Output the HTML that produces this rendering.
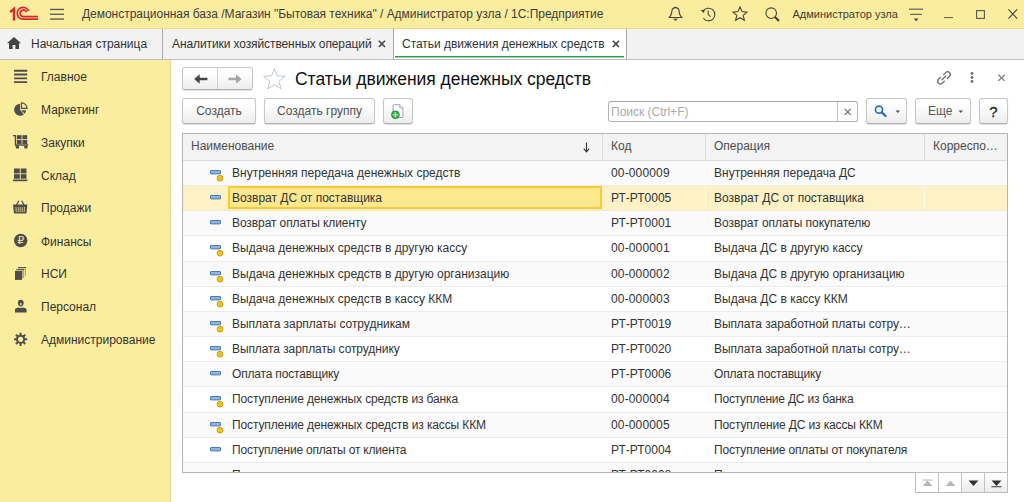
<!DOCTYPE html>
<html lang="ru">
<head>
<meta charset="utf-8">
<title>Статьи движения денежных средств</title>
<style>
*{box-sizing:border-box;margin:0;padding:0}
html,body{width:1024px;height:502px;overflow:hidden;background:#fff}
body{font-family:"Liberation Sans",sans-serif;font-size:12px;color:#333;position:relative}
svg{position:absolute;overflow:visible}
#titlebar{position:absolute;left:0;top:0;width:1024px;height:29px;background:#fbed9e;border-bottom:1px solid #e9d98a}
#titlebar .t{position:absolute;top:0;height:29px;line-height:29px;white-space:nowrap;color:#3c3c3c}
#tabs{position:absolute;left:0;top:29px;width:1024px;height:31px;background:#f2f2f2;border-bottom:1px solid #bdbdbd}
#tabs .t{position:absolute;top:0;height:30px;line-height:30px;white-space:nowrap;color:#333}
#tabs .sep{position:absolute;top:0;width:1px;height:30px;background:#a9a9a9}
#activetab{position:absolute;left:394px;top:0;width:233px;height:30px;background:#fff;border-right:1px solid #a9a9a9}
#activetab:after{content:"";position:absolute;left:1px;right:2px;bottom:1px;height:2px;background:linear-gradient(#22a04d 50%,rgba(34,160,77,.45) 50%)}
#sidebar{position:absolute;left:0;top:60px;width:171px;height:442px;background:#fbed9e;border-right:1px solid #e6d88f}
#sidebar .it{position:absolute;left:41px;height:20px;line-height:20px;white-space:nowrap;color:#333}
#content{position:absolute;left:171px;top:60px;width:853px;height:442px;background:#fff}
.btn{position:absolute;border:1px solid #c6c6c6;border-bottom-color:#b0b0b0;border-radius:3px;background:linear-gradient(#ffffff 20%,#ededed);box-shadow:0 1px 1px rgba(0,0,0,.13);text-align:center;color:#505050;white-space:nowrap}
#title{position:absolute;left:124px;top:8px;letter-spacing:-0.03px;font-size:17.5px;line-height:22px;color:#111;white-space:nowrap}
#search{position:absolute;left:437px;top:41px;width:250px;height:21px;border:1px solid #b4b4b4;border-top-color:#a6a6a6;border-radius:3px;background:#fff}
#search span{position:absolute;left:2px;top:0;line-height:21px;color:#aaa}
#search i{position:absolute;left:228px;top:0;width:1px;height:19px;background:#c4c4c4}
#grid{position:absolute;left:11px;top:73px;width:826px;height:340px;border:1px solid #b3b3b3;overflow:hidden;background:#fff}
#grid .hd{position:absolute;left:0;top:0;width:824px;height:27px;background:#f3f3f3;border-bottom:1px solid #dadada}
#grid .hd span{position:absolute;top:0;height:26px;line-height:25px;color:#4d4d4d;white-space:nowrap}
#grid .hd i{position:absolute;top:0;width:1px;height:26px;background:#dcdcdc}
.row{position:absolute;left:0;width:824px;border-bottom:1px solid #ececec;background:#fff}
.row.alt{background:#fafafa}
.row.sel{background:#fdf2c6;border-bottom-color:#f3e9c2}
.row span{position:absolute;top:0;height:25px;line-height:25px;white-space:nowrap;color:#333}
.row .n{left:49px}
.row .c{left:428px}
.row .o{left:531px}
.row svg{left:27px;top:9px}
.row .cur{position:absolute;left:45px;top:0;width:374px;height:23px;border:2px solid #f8cb34;background:#fde78f}
.row .vs{position:absolute;top:0;width:1px;height:24px;background:#fffbe9}
#pager{position:absolute;left:744px;top:412px;width:93px;height:21px;border:1px solid #bdbdbd;background:#fff}
#pager i{position:absolute;top:0;width:1px;height:19px;background:#c4c4c4}
#pager b{position:absolute;top:0;height:19px;background:linear-gradient(#fff,#ececec)}
</style>
</head>
<body>
<div id="titlebar">
  <svg style="left:9px;top:6px" width="30" height="16" viewBox="0 0 30 16">
    <path d="M1.2 6.2 L5 2.9 V14.4" fill="none" stroke="#d9262c" stroke-width="2.4"/>
    <g fill="none" stroke="#d9262c" stroke-width="1.8">
      <path d="M29 13.2 H14.5 A5.9 5.9 0 1 1 19.6 5"/>
      <path d="M29 10.6 H14.6 A3.3 3.3 0 1 1 17.6 6.2"/>
    </g>
  </svg>
  <svg style="left:50px;top:8px" width="15" height="13" viewBox="0 0 15 13">
    <g fill="#555"><rect x="0" y="0.8" width="14" height="1.3"/><rect x="0" y="5.6" width="14" height="1.3"/><rect x="0" y="10.4" width="14" height="1.3"/></g>
  </svg>
  <span class="t" style="left:82px;letter-spacing:-0.025px">Демонстрационная база /Магазин "Бытовая техника" / Администратор узла / 1С:Предприятие</span>
  <!-- bell -->
  <svg style="left:668px;top:6px" width="15" height="16" viewBox="0 0 15 16">
    <path d="M1 11.5 C3.2 10 3.6 8 3.8 5.5 C4 3 5.5 1.6 7.5 1.6 C9.5 1.6 11 3 11.2 5.5 C11.4 8 11.8 10 14 11.5 Z" fill="none" stroke="#444" stroke-width="1.1" stroke-linejoin="round"/>
    <path d="M5.6 13 H9.4 L7.5 14.6 Z" fill="#444" stroke="#444" stroke-width="0.6"/>
    <path d="M7.5 0.6 V1.8" stroke="#444" stroke-width="1.2"/>
  </svg>
  <!-- history -->
  <svg style="left:700px;top:7px" width="16" height="15" viewBox="0 0 16 15">
    <path d="M3.2 4.2 A6.3 6.3 0 1 1 3.4 11.2" fill="none" stroke="#444" stroke-width="1.1"/>
    <path d="M0.8 3.2 L4.6 2.6 L4 6.2 Z" fill="#444"/>
    <path d="M8.2 3.6 V7.6 L10.6 9.6" fill="none" stroke="#444" stroke-width="1.1"/>
  </svg>
  <!-- star -->
  <svg style="left:732px;top:6px" width="16" height="15" viewBox="0 0 16 15">
    <path d="M8 1 L10 5.6 L15 6.1 L11.2 9.4 L12.4 14.3 L8 11.7 L3.6 14.3 L4.8 9.4 L1 6.1 L6 5.6 Z" fill="none" stroke="#444" stroke-width="1.1" stroke-linejoin="miter"/>
  </svg>
  <!-- search -->
  <svg style="left:765px;top:7px" width="15" height="15" viewBox="0 0 15 15">
    <circle cx="6.2" cy="6.2" r="5.3" fill="none" stroke="#444" stroke-width="1.1"/>
    <path d="M10 10 L14 14" stroke="#333" stroke-width="1.8"/>
  </svg>
  <span class="t" style="left:792.5px;font-size:11px">Администратор узла</span>
  <!-- settings -->
  <svg style="left:909px;top:8px" width="15" height="14" viewBox="0 0 15 14">
    <rect x="0" y="0.6" width="14" height="1.1" fill="#555"/>
    <rect x="1.2" y="5.8" width="11.6" height="1.1" fill="#555"/>
    <path d="M4.6 10.4 H9.6 L7.1 13.2 Z" fill="#444"/>
  </svg>
  <svg style="left:944px;top:17px" width="10" height="2" viewBox="0 0 10 2"><rect x="0" y="0" width="9" height="1.1" fill="#666"/></svg>
  <svg style="left:976px;top:10px" width="10" height="10" viewBox="0 0 10 10"><rect x="0.6" y="0.6" width="7.8" height="7.8" fill="none" stroke="#555" stroke-width="1.1"/></svg>
  <svg style="left:1008px;top:9px" width="10" height="10" viewBox="0 0 10 10"><path d="M0.4 0.4 L9.2 9.6 M9.2 0.4 L0.4 9.6" stroke="#444" stroke-width="1.1" fill="none"/></svg>
</div>
<div id="tabs">
  <svg style="left:7px;top:8px" width="14" height="12" viewBox="0 0 14 12">
    <path d="M7 0 L14 6.2 H12 V12 H8.4 V8 H5.6 V12 H2 V6.2 H0 Z" fill="#444"/>
  </svg>
  <span class="t" style="left:31px">Начальная страница</span>
  <div class="sep" style="left:162px"></div>
  <span class="t" style="left:172px;letter-spacing:-0.1px">Аналитики хозяйственных операций</span>
  <svg style="left:377.5px;top:11px" width="8" height="8" viewBox="0 0 8 8"><path d="M0.8 0.8 L7 7 M7 0.8 L0.8 7" stroke="#444" stroke-width="1.6"/></svg>
  <div class="sep" style="left:393px"></div>
  <div id="activetab"></div>
  <span class="t" style="left:402px;letter-spacing:-0.03px">Статьи движения денежных средств</span>
  <svg style="left:611.5px;top:11px" width="8" height="8" viewBox="0 0 8 8"><path d="M0.8 0.8 L7 7 M7 0.8 L0.8 7" stroke="#444" stroke-width="1.6"/></svg>
</div>
<div id="sidebar">
  <!-- Главное -->
  <svg style="left:14px;top:9px" width="14" height="15" viewBox="0 0 14 15">
    <g fill="#4d4d4d"><rect x="0" y="0.8" width="13.2" height="1.9" rx="0.5"/><rect x="0" y="4.6" width="13.2" height="1.9" rx="0.5"/><rect x="0" y="8.4" width="13.2" height="1.9" rx="0.5"/><rect x="0" y="12.2" width="13.2" height="1.9" rx="0.5"/></g>
  </svg>
  <span class="it" style="top:7px">Главное</span>
  <!-- Маркетинг -->
  <svg style="left:13px;top:41px" width="16" height="16" viewBox="0 0 16 16">
    <path d="M7 8.8 L7 2.8 A6 6 0 1 0 10.9 13.4 Z" fill="#4d4d4d"/>
    <path d="M8.1 9.2 H13 A6 6 0 0 1 11.7 12.7 Z" fill="#4d4d4d"/>
    <path d="M8.4 7.4 V1.8 A5.6 5.6 0 0 1 14 7.4 Z" fill="none" stroke="#4d4d4d" stroke-width="1.2" stroke-linejoin="miter"/>
  </svg>
  <span class="it" style="top:40px">Маркетинг</span>
  <!-- Закупки -->
  <svg style="left:13px;top:74px" width="16" height="16" viewBox="0 0 16 16">
    <path d="M0 1.6 H2.4 V11 H15.2" fill="none" stroke="#4d4d4d" stroke-width="1.3"/>
    <g fill="#4d4d4d"><rect x="3.8" y="1.2" width="4.8" height="4"/><rect x="9.4" y="1.2" width="4.8" height="4"/><rect x="3.8" y="6" width="4.8" height="4"/><rect x="9.4" y="6" width="4.8" height="4"/>
    <rect x="2.8" y="11.4" width="3.2" height="3.2" rx="0.9"/><rect x="11.3" y="11.4" width="3.2" height="3.2" rx="0.9"/></g>
  </svg>
  <span class="it" style="top:72.5px">Закупки</span>
  <!-- Склад -->
  <svg style="left:13px;top:108px" width="15" height="14" viewBox="0 0 15 14">
    <g fill="#4d4d4d"><rect x="1" y="0.5" width="5.8" height="4.9"/><rect x="7.7" y="0.5" width="5.8" height="4.9"/><rect x="1" y="6.2" width="5.8" height="4.5"/><rect x="7.7" y="6.2" width="5.8" height="4.5"/><rect x="0" y="11.5" width="14.3" height="1.7"/></g>
  </svg>
  <span class="it" style="top:106px">Склад</span>
  <!-- Продажи -->
  <svg style="left:13px;top:140px" width="15" height="14" viewBox="0 0 15 14">
    <path d="M3.4 5 L5.8 0.8 M11 5 L8.6 0.8" stroke="#4d4d4d" stroke-width="1.3" fill="none"/>
    <path d="M0 4.6 H14.4 L13.4 13.6 H1 Z" fill="#4d4d4d"/>
    <g stroke="#d9cc88" stroke-width="0.9"><path d="M2.9 7 L3.3 12.2 M5.1 7 L5.3 12.2 M7.2 7 V12.2 M9.3 7 L9.1 12.2 M11.5 7 L11.1 12.2"/></g>
  </svg>
  <span class="it" style="top:138px">Продажи</span>
  <!-- Финансы -->
  <svg style="left:13px;top:173px" width="16" height="16" viewBox="0 0 16 16">
    <circle cx="7.7" cy="7.5" r="6.7" fill="#4d4d4d"/>
    <text x="7.9" y="11.3" text-anchor="middle" style="font-family:'DejaVu Sans',sans-serif" font-size="10.5" fill="#e9dc93" stroke="#e9dc93" stroke-width="0.15">₽</text>
  </svg>
  <span class="it" style="top:171.5px">Финансы</span>
  <!-- НСИ -->
  <svg style="left:14px;top:206px" width="14" height="15" viewBox="0 0 14 15">
    <path d="M4 1.6 H12 V9.6 H10.8 V2.6 H4 Z" fill="#b7ab72"/>
    <path d="M4 1 H12 V2 H4 Z" fill="#555"/>
    <path d="M2.4 3.6 H10.2 V12 H8 V4.6 H2.4 Z" fill="#b7ab72"/>
    <path d="M2.4 3 H10.2 V4 H2.4 Z" fill="#555"/>
    <rect x="1" y="4.9" width="7" height="9" fill="#4d4d4d"/>
  </svg>
  <span class="it" style="top:204px">НСИ</span>
  <!-- Персонал -->
  <svg style="left:14px;top:239px" width="14" height="14" viewBox="0 0 14 14">
    <path d="M6.8 0.8 C8.8 0.8 9.8 2.2 9.7 4 C9.6 5.8 8.6 7.6 6.8 7.6 C5 7.6 4 5.8 3.9 4 C3.8 2.2 4.8 0.8 6.8 0.8 Z" fill="#4d4d4d"/>
    <path d="M5.9 4.3 Q6.8 3.7 7.7 4.3 Q7.7 6.4 6.8 6.6 Q5.9 6.4 5.9 4.3 Z" fill="#e9dc93"/>
    <path d="M1 13.6 V10.6 C1 9.2 3 8.8 4.6 8.4 L6.8 9 L9 8.4 C10.6 8.8 12.6 9.2 12.6 10.6 V13.6 Z" fill="#4d4d4d"/>
  </svg>
  <span class="it" style="top:237px">Персонал</span>
  <!-- Администрирование -->
  <svg style="left:13px;top:272px" width="15" height="15" viewBox="0 0 15 15">
    <circle cx="7.6" cy="7.3" r="3.6" fill="none" stroke="#4d4d4d" stroke-width="2"/>
    <g stroke="#4d4d4d" stroke-width="1.9">
      <path d="M7.6 0.7 V3.4 M7.6 11.2 V13.9 M1 7.3 H3.7 M11.5 7.3 H14.2 M2.9 2.6 L4.8 4.5 M10.4 10.1 L12.3 12 M12.3 2.6 L10.4 4.5 M4.8 10.1 L2.9 12"/>
    </g>
  </svg>
  <span class="it" style="top:269.5px">Администрирование</span>
</div>
<div id="content">
  <div class="btn" style="left:11px;top:7px;width:71px;height:23px">
    <div style="position:absolute;left:34px;top:0;width:1px;height:21px;background:#d2d2d2"></div>
    <svg style="left:10.5px;top:6px" width="14" height="10" viewBox="0 0 14 10"><path d="M13.4 3.7 H5.7 V0.3 L0.2 5 L5.7 9.7 V6.3 H13.4 Z" fill="#444"/></svg>
    <svg style="left:45px;top:6px" width="14" height="10" viewBox="0 0 14 10"><path d="M0.4 3.7 H8.1 V0.3 L13.6 5 L8.1 9.7 V6.3 H0.4 Z" fill="#a6a6a6"/></svg>
  </div>
  <svg style="left:92px;top:8px" width="23" height="22" viewBox="0 0 23 22">
    <path d="M11.4 0.7 L14.2 7.85 L22.1 8.3 L16 13.3 L18.1 20.9 L11.4 16.6 L4.7 20.9 L6.8 13.3 L0.7 8.3 L8.6 7.85 Z" fill="#fff" stroke="#b4bfcc" stroke-width="0.9" stroke-linejoin="miter"/>
  </svg>
  <div id="title">Статьи движения денежных средств</div>
  <!-- link, kebab, close -->
  <svg style="left:765px;top:10px" width="17" height="16" viewBox="0 0 17 16">
    <g fill="none" stroke="#6a6a6a" stroke-width="1.25" stroke-linecap="round" transform="translate(8 7.9) rotate(-43)">
      <path d="M-2 -2.7 H-4.9 A2.7 2.7 0 0 0 -4.9 2.7 H-2"/>
      <path d="M2 -2.7 H4.9 A2.7 2.7 0 0 1 4.9 2.7 H2"/>
      <path d="M-2.7 0 H2.7"/>
    </g>
  </svg>
  <svg style="left:799px;top:12px" width="4" height="11" viewBox="0 0 4 11"><g fill="#666"><circle cx="2" cy="1.4" r="1.35"/><circle cx="2" cy="5.4" r="1.35"/><circle cx="2" cy="9.4" r="1.35"/></g></svg>
  <svg style="left:827px;top:14px" width="8" height="8" viewBox="0 0 8 8"><path d="M0.3 0.7 L6.7 6.9 M6.7 0.7 L0.3 6.9" stroke="#777" stroke-width="1.2"/></svg>

  <div class="btn" style="left:11px;top:38px;width:74px;height:26px;line-height:24px">Создать</div>
  <div class="btn" style="left:93px;top:38px;width:111px;height:26px;line-height:24px">Создать группу</div>
  <div class="btn" style="left:212px;top:38px;width:30px;height:26px">
    <svg style="left:7px;top:3px" width="16" height="17" viewBox="0 0 16 17">
      <path d="M3 2.7 H8.8 L11.9 5.8 V14.6 Q11.9 15.5 11 15.5 H3 Q2.1 15.5 2.1 14.6 V3.6 Q2.1 2.7 3 2.7 Z" fill="#fff" stroke="#99a5b7" stroke-width="1"/>
      <path d="M8.8 2.7 V5.8 H11.9" fill="#eef0f4" stroke="#99a5b7" stroke-width="0.9"/>
      <circle cx="4.4" cy="12.8" r="4" fill="#37a648" stroke="#2a9a3e" stroke-width="0.7"/>
      <path d="M4.4 10.3 V15.3 M1.9 12.8 H6.9" stroke="#d8f0da" stroke-width="1.3"/>
    </svg>
  </div>
  <div id="search"><span>Поиск (Ctrl+F)</span><i></i>
    <svg style="left:235px;top:6px" width="8" height="8" viewBox="0 0 8 8"><path d="M0.7 0.9 L6.7 6.9 M6.7 0.9 L0.7 6.9" stroke="#666" stroke-width="1.1"/></svg>
  </div>
  <div class="btn" style="left:695px;top:38px;width:41px;height:26px">
    <svg style="left:7px;top:6px" width="14" height="13" viewBox="0 0 14 13">
      <circle cx="5" cy="4.7" r="3.5" fill="none" stroke="#2b6fb3" stroke-width="1.7"/>
      <path d="M7.8 7.4 L11.6 11" stroke="#2b6fb3" stroke-width="2.3" stroke-linecap="round"/>
    </svg>
    <svg style="left:28px;top:11px" width="6" height="4" viewBox="0 0 6 4"><path d="M0.5 0.4 H5.1 L2.8 3 Z" fill="#555"/></svg>
  </div>
  <div class="btn" style="left:744px;top:38px;width:56px;height:26px;line-height:24px;text-align:left;padding-left:12px;color:#555">Еще
    <svg style="left:42px;top:11px" width="6" height="4" viewBox="0 0 6 4"><path d="M0.5 0.4 H5.1 L2.8 3 Z" fill="#555"/></svg>
  </div>
  <div class="btn" style="left:808px;top:38px;width:29px;height:26px;line-height:25px;font-size:15px;color:#222;-webkit-text-stroke:0.3px #222">?</div>

  <div id="grid">
    <div class="hd">
      <span style="left:8px">Наименование</span>
      <svg style="left:400px;top:8px" width="7" height="11" viewBox="0 0 7 11"><path d="M3.5 0.4 V9.4 M0.8 6.6 L3.5 9.8 L6.2 6.6" fill="none" stroke="#333" stroke-width="1.1"/></svg>
      <i style="left:419px"></i><span style="left:428px">Код</span>
      <i style="left:522px"></i><span style="left:531px">Операция</span>
      <i style="left:741px"></i><span style="left:750px">Корреспо…</span>
    </div>
    <div class="row alt" style="top:27px;height:25px"><svg width="14" height="12" viewBox="0 0 14 12"><rect x="0.5" y="0.5" width="10" height="3.4" rx="0.5" fill="#8db6e0" stroke="#4a7cb2" stroke-width="1"/><circle cx="10" cy="8.2" r="2.9" fill="#f4c21f" stroke="#c8960c" stroke-width="0.9"/></svg><span class="n">Внутренняя передача денежных средств</span><span class="c" style="letter-spacing:.15px">00-000009</span><span class="o">Внутренняя передача ДС</span></div>
    <div class="row sel" style="top:52px;height:25px"><div class="cur"></div><i class="vs" style="left:522px"></i><i class="vs" style="left:741px"></i><svg width="14" height="12" viewBox="0 0 14 12"><rect x="0.5" y="0.5" width="10" height="3.4" rx="0.5" fill="#8db6e0" stroke="#4a7cb2" stroke-width="1"/></svg><span class="n">Возврат ДС от поставщика</span><span class="c">РТ-РТ0005</span><span class="o">Возврат ДС от поставщика</span></div>
    <div class="row alt" style="top:77px;height:25px"><svg width="14" height="12" viewBox="0 0 14 12"><rect x="0.5" y="0.5" width="10" height="3.4" rx="0.5" fill="#8db6e0" stroke="#4a7cb2" stroke-width="1"/></svg><span class="n" style="letter-spacing:-0.09px">Возврат оплаты клиенту</span><span class="c">РТ-РТ0001</span><span class="o" style="letter-spacing:-0.05px">Возврат оплаты покупателю</span></div>
    <div class="row" style="top:102px;height:26px"><svg width="14" height="12" viewBox="0 0 14 12"><rect x="0.5" y="0.5" width="10" height="3.4" rx="0.5" fill="#8db6e0" stroke="#4a7cb2" stroke-width="1"/><circle cx="10" cy="8.2" r="2.9" fill="#f4c21f" stroke="#c8960c" stroke-width="0.9"/></svg><span class="n">Выдача денежных средств в другую кассу</span><span class="c" style="letter-spacing:.15px">00-000001</span><span class="o">Выдача ДС в другую кассу</span></div>
    <div class="row alt" style="top:128px;height:25px"><svg width="14" height="12" viewBox="0 0 14 12"><rect x="0.5" y="0.5" width="10" height="3.4" rx="0.5" fill="#8db6e0" stroke="#4a7cb2" stroke-width="1"/><circle cx="10" cy="8.2" r="2.9" fill="#f4c21f" stroke="#c8960c" stroke-width="0.9"/></svg><span class="n">Выдача денежных средств в другую организацию</span><span class="c" style="letter-spacing:.15px">00-000002</span><span class="o">Выдача ДС в другую организацию</span></div>
    <div class="row" style="top:153px;height:25px"><svg width="14" height="12" viewBox="0 0 14 12"><rect x="0.5" y="0.5" width="10" height="3.4" rx="0.5" fill="#8db6e0" stroke="#4a7cb2" stroke-width="1"/><circle cx="10" cy="8.2" r="2.9" fill="#f4c21f" stroke="#c8960c" stroke-width="0.9"/></svg><span class="n">Выдача денежных средств в кассу ККМ</span><span class="c" style="letter-spacing:.15px">00-000003</span><span class="o">Выдача ДС в кассу ККМ</span></div>
    <div class="row alt" style="top:178px;height:25px"><svg width="14" height="12" viewBox="0 0 14 12"><rect x="0.5" y="0.5" width="10" height="3.4" rx="0.5" fill="#8db6e0" stroke="#4a7cb2" stroke-width="1"/><circle cx="10" cy="8.2" r="2.9" fill="#f4c21f" stroke="#c8960c" stroke-width="0.9"/></svg><span class="n" style="letter-spacing:-0.04px">Выплата зарплаты сотрудникам</span><span class="c">РТ-РТ0019</span><span class="o" style="letter-spacing:-0.09px">Выплата заработной платы сотру…</span></div>
    <div class="row" style="top:203px;height:25px"><svg width="14" height="12" viewBox="0 0 14 12"><rect x="0.5" y="0.5" width="10" height="3.4" rx="0.5" fill="#8db6e0" stroke="#4a7cb2" stroke-width="1"/><circle cx="10" cy="8.2" r="2.9" fill="#f4c21f" stroke="#c8960c" stroke-width="0.9"/></svg><span class="n" style="letter-spacing:-0.09px">Выплата зарплаты сотруднику</span><span class="c">РТ-РТ0020</span><span class="o" style="letter-spacing:-0.09px">Выплата заработной платы сотру…</span></div>
    <div class="row alt" style="top:228px;height:25px"><svg width="14" height="12" viewBox="0 0 14 12"><rect x="0.5" y="0.5" width="10" height="3.4" rx="0.5" fill="#8db6e0" stroke="#4a7cb2" stroke-width="1"/></svg><span class="n" style="letter-spacing:-0.18px">Оплата поставщику</span><span class="c">РТ-РТ0006</span><span class="o" style="letter-spacing:-0.18px">Оплата поставщику</span></div>
    <div class="row" style="top:253px;height:26px"><svg width="14" height="12" viewBox="0 0 14 12"><rect x="0.5" y="0.5" width="10" height="3.4" rx="0.5" fill="#8db6e0" stroke="#4a7cb2" stroke-width="1"/><circle cx="10" cy="8.2" r="2.9" fill="#f4c21f" stroke="#c8960c" stroke-width="0.9"/></svg><span class="n" style="letter-spacing:-0.13px">Поступление денежных средств из банка</span><span class="c" style="letter-spacing:.15px">00-000004</span><span class="o" style="letter-spacing:-0.21px">Поступление ДС из банка</span></div>
    <div class="row alt" style="top:279px;height:25px"><svg width="14" height="12" viewBox="0 0 14 12"><rect x="0.5" y="0.5" width="10" height="3.4" rx="0.5" fill="#8db6e0" stroke="#4a7cb2" stroke-width="1"/><circle cx="10" cy="8.2" r="2.9" fill="#f4c21f" stroke="#c8960c" stroke-width="0.9"/></svg><span class="n" style="letter-spacing:-0.12px">Поступление денежных средств из кассы ККМ</span><span class="c" style="letter-spacing:.15px">00-000005</span><span class="o" style="letter-spacing:-0.135px">Поступление ДС из кассы ККМ</span></div>
    <div class="row" style="top:304px;height:25px"><svg width="14" height="12" viewBox="0 0 14 12"><rect x="0.5" y="0.5" width="10" height="3.4" rx="0.5" fill="#8db6e0" stroke="#4a7cb2" stroke-width="1"/></svg><span class="n" style="letter-spacing:-0.2px">Поступление оплаты от клиента</span><span class="c">РТ-РТ0004</span><span class="o" style="letter-spacing:-0.16px">Поступление оплаты от покупателя</span></div>
    <div class="row alt" style="top:329px;height:25px"><svg width="14" height="12" viewBox="0 0 14 12"><rect x="0.5" y="0.5" width="10" height="3.4" rx="0.5" fill="#8db6e0" stroke="#4a7cb2" stroke-width="1"/></svg><span class="n">Прочее поступление</span><span class="c">РТ-РТ0008</span><span class="o">Прочее поступление</span></div>
  </div>
  <div id="pager">
    <b style="left:46px;width:45px"></b>
    <i style="left:22px"></i><i style="left:45px"></i><i style="left:68px"></i>
    <svg style="left:6px;top:6px" width="11" height="8" viewBox="0 0 11 8"><path d="M0.4 0.6 H10.6 V1.6 H0.4 Z M5.5 1.6 L10.4 7 H0.6 Z" fill="#b5b5b5"/></svg>
    <svg style="left:29px;top:7px" width="11" height="7" viewBox="0 0 11 7"><path d="M5.5 0.6 L10.4 6 H0.6 Z" fill="#b5b5b5"/></svg>
    <svg style="left:52px;top:7px" width="11" height="7" viewBox="0 0 11 7"><path d="M5.5 6 L10.4 0.6 H0.6 Z" fill="#333"/></svg>
    <svg style="left:75px;top:7px" width="11" height="8" viewBox="0 0 11 8"><path d="M5.5 6 L10.4 0.6 H0.6 Z M0.4 6.2 H10.6 V7.2 H0.4 Z" fill="#333"/></svg>
  </div>
</div>
</body>
</html>
